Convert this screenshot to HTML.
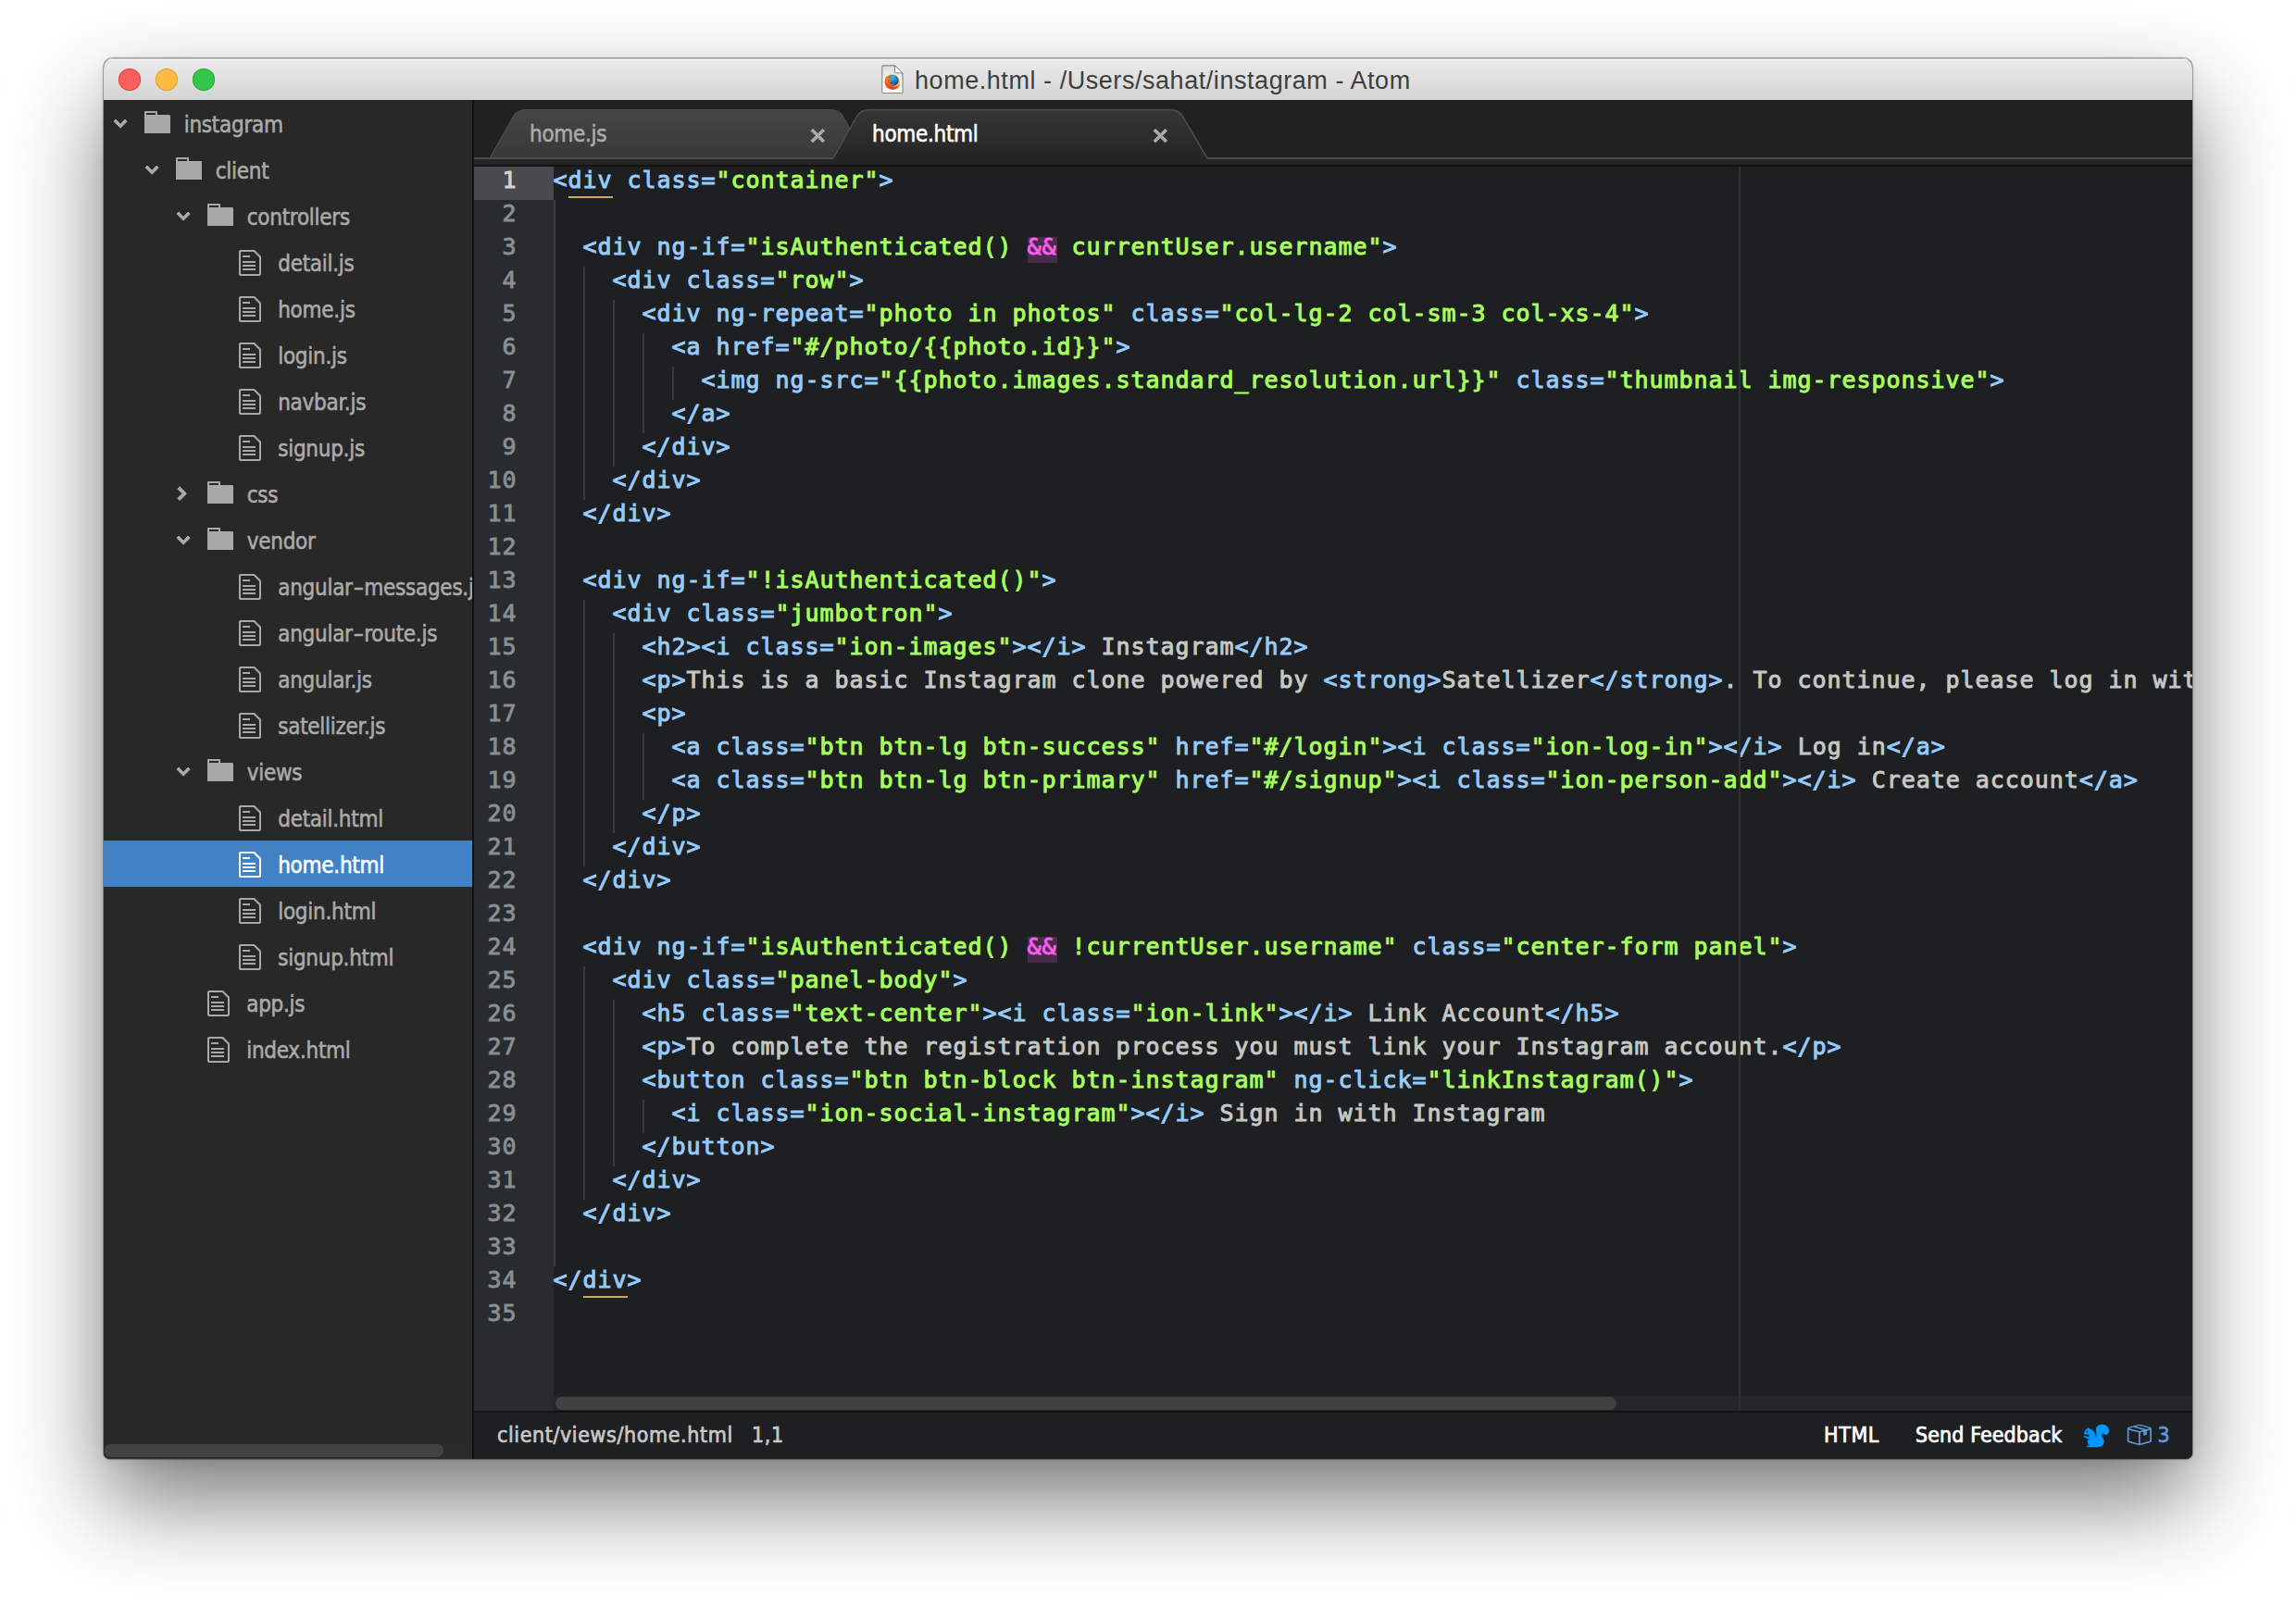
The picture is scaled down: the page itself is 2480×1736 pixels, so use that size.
<!DOCTYPE html>
<html lang="en">
<head>
<meta charset="utf-8">
<title>home.html - /Users/sahat/instagram - Atom</title>
<style>
*{box-sizing:border-box}
html,body{margin:0;padding:0}
body{width:2480px;height:1736px;background:#fff;overflow:hidden;position:relative;font-family:"DejaVu Sans Condensed","DejaVu Sans","Liberation Sans",sans-serif;font-stretch:condensed}
.win{position:absolute;left:112px;top:63px;width:2256px;height:1513px;border-radius:10px 10px 7px 7px;background:#1d1f21;
 box-shadow:0 0 1px .5px rgba(0,0,0,.35),0 46px 98px rgba(0,0,0,.52),0 4px 14px rgba(0,0,0,.07)}
.clip{position:absolute;left:0;top:0;right:0;bottom:0;border-radius:10px 10px 7px 7px;overflow:hidden}
/* title bar */
.tb{position:absolute;left:0;top:0;right:0;height:45px;background:linear-gradient(#ebebeb,#d4d4d4);box-shadow:inset 0 1px 0 #c4c4c4,inset 0 2px 0 #f3f3f3}
.tl{position:absolute;top:11px;width:24px;height:24px;border-radius:50%}
.tl.r{left:16px;background:#fc615d;box-shadow:inset 0 0 0 1px #e0443e}
.tl.y{left:56px;background:#fdbc40;box-shadow:inset 0 0 0 1px #dea035}
.tl.gr{left:96px;background:#34c84a;box-shadow:inset 0 0 0 1px #27aa35}
.ttl{position:absolute;left:876px;top:1.500px;height:45px;line-height:45px;font-family:"Liberation Sans",sans-serif;font-size:27px;color:#3e3e3e;white-space:nowrap;letter-spacing:.55px}
.doc{position:absolute;left:839px;top:6px}
/* sidebar */
.side{position:absolute;left:0;top:45px;width:398px;bottom:0;background:#282828;overflow:hidden}
.sb{position:absolute;left:398px;top:45px;width:2px;bottom:0;background:#101011}
.row{position:relative;height:50px;font-size:24px;letter-spacing:-.27px;color:#aaa;white-space:nowrap}
.row.sel{background:#4182c4;color:#fff}
.row span{position:absolute}
.row .nm,.tab-t{-webkit-text-stroke:.55px}
.st span{-webkit-text-stroke:.7px}
.row .chw{top:20.600px;line-height:0;margin-left:.5px}
.row .icw{top:12px;line-height:0}
.hy{display:inline-block;position:static!important;width:12.500px;letter-spacing:0;text-align:center;transform:scaleX(1.500)}
.row .nm{top:1.600px;line-height:50px}
svg.ic path,svg.ch path{fill:#a9a9a9}
svg.ch{overflow:visible}
svg.ch path{stroke:#a9a9a9;stroke-width:.7}
.sel svg.ic path{fill:#fff}
.row .chw svg.r{position:relative;left:1.600px;top:-2.800px}
.sscroll{position:absolute;left:1px;bottom:2px;width:366px;height:14px;border-radius:7px;background:#414342}
.strack{position:absolute;left:0;bottom:0;width:398px;height:17px;background:#2b2b2b}
/* main */
.main{position:absolute;left:400px;top:45px;right:0;bottom:0;overflow:hidden}
.tabs{position:absolute;left:0;top:0;right:0;height:72px;background:#212121}
.tabs svg{position:absolute;left:0;top:0}
.tab-t{position:absolute;top:19px;font-size:24px;letter-spacing:-.3px;line-height:36px;color:#aaa;white-space:nowrap}
.tab-t.act{color:#fff}
.ed{position:absolute;left:0;top:72px;right:0;height:1344px;background:#1d1f21;overflow:hidden}
.gut{position:absolute;left:0;top:0;width:86px;bottom:0;background:#282c2f}
.n{-webkit-text-stroke:.85px;height:36px;line-height:30.800px;font-family:"DejaVu Sans Mono","Liberation Mono",monospace;font-size:25px;letter-spacing:.949px;color:#8a8e8f;text-align:right;padding-right:39.400px;position:relative}
.n.cur{background:#484a4e;color:#d4d4d2}
.gut .ni{position:relative;top:-3px}
.code{position:absolute;left:85.500px;top:-3.100px;font-family:"DejaVu Sans Mono","Liberation Mono",monospace;font-size:25px;letter-spacing:.949px;color:#c5c8c6}
.l{height:36px;line-height:36px;white-space:pre;-webkit-text-stroke:.95px}
.t{color:#96cbfe}.s{color:#a8ff60}.i{color:#fd5ff1}
.g{position:absolute;width:2px;background:#393b3d}
.g.g0{background:#3d4144}
.ibg{position:absolute;width:32px;height:28px;background:#482a4b}
.ul{position:absolute;height:2px;width:48px;background:#c8aa66}
.wrap{position:absolute;left:1366px;top:0;width:2px;bottom:0;background:#303234;z-index:2}
.hs{position:absolute;left:86px;right:0;bottom:0;height:16px;background:#252628}
.hs i{position:absolute;left:2px;top:1px;width:1146px;height:14px;border-radius:7px;background:#404241}
.gutb{position:absolute;left:0;bottom:0;width:86px;height:16px;background:#282c2f}
.st{position:absolute;left:0;right:0;bottom:0;height:52px;background:#1d1f21;border-top:2px solid #111213;font-size:23px;letter-spacing:.6px;color:#c8c8c8;white-space:nowrap}
.st span{position:absolute;top:0;line-height:48px}
.st .w{color:#fff}
.st svg{position:absolute}
</style>
</head>
<body>
<div class="win"><div class="clip">
  <div class="tb">
    <div class="tl r"></div><div class="tl y"></div><div class="tl gr"></div>
    <svg class="doc" width="26" height="33" viewBox="0 0 26 33"><defs><linearGradient id="dg" x1="0" y1="0" x2="0" y2="1"><stop offset="0" stop-color="#dcdcdc"/><stop offset=".55" stop-color="#f4f4f4"/><stop offset="1" stop-color="#fff"/></linearGradient><radialGradient id="gb" cx=".45" cy=".25" r=".8"><stop offset="0" stop-color="#3fc1f0"/><stop offset=".5" stop-color="#1878c8"/><stop offset="1" stop-color="#06246e"/></radialGradient><linearGradient id="fx" x1="0" y1="0" x2="1" y2="0"><stop offset="0" stop-color="#e8601c"/><stop offset=".55" stop-color="#f08a1c"/><stop offset=".85" stop-color="#fbd33c"/><stop offset="1" stop-color="#f4a21f"/></linearGradient><linearGradient id="fo" x1="0" y1="0" x2="0" y2="1"><stop offset="0" stop-color="#f58a1e"/><stop offset="1" stop-color="#d8401f"/></linearGradient></defs><path d="M2.800 1.900h12.700l8.500 8.500V30.500q0 1-1 1H2.800q-1 0-1-1V2.900q0-1 1-1z" fill="url(#dg)" stroke="#858585" stroke-width="1.100"/><path d="M15.500 1.900v7q0 1 1 1H24z" fill="#fff" stroke="#858585" stroke-width="1" stroke-linejoin="round"/><g transform="translate(12.800,19.600)"><circle r="8.200" fill="url(#fx)"/><circle cx=".9" cy="-1.700" r="5.900" fill="url(#gb)"/><path d="M-7.900-1.500C-8.300 4-3.500 8.400 1.500 8.100 5 7.800 7.600 5.200 8.100 1.600 6 5 2 6-.5 4.200 1.500 4 2.500 3 2.600 2 0 3.200-2.600 2-3 0c1 .6 2 .3 2.400-.5C-2.400-1.500-2.600-3.400-1.600-4.600-3.500-4.400-5.200-4.600-6.500-6.800-7-5-7.900-4-7.900-1.500z" fill="url(#fo)"/></g></svg>
    <div class="ttl">home.html - /Users/sahat/instagram - Atom</div>
  </div>
  <div class="side">
<div class="row"><span class="chw" style="left:10px"><svg class="ch" viewBox="0 0 10 6.5" width="14.200" height="9.230"><path d="M5 6.5L0 1.5 1.5 0 5 3.75 8.5 0 10 1.5z"/></svg></span><span class="icw" style="left:44px"><svg class="ic fo" viewBox="0 0 14 12" width="28" height="24"><path fill-rule="evenodd" d="M0 .5Q0 0 .5 0H6.500Q7 0 7 .5V2H13.400Q14 2 14 2.600V12H0zM1 1V2H6V1z"/></svg></span><span class="nm" style="left:86.7px">instagram</span></div>
<div class="row"><span class="chw" style="left:44px"><svg class="ch" viewBox="0 0 10 6.5" width="14.200" height="9.230"><path d="M5 6.5L0 1.5 1.5 0 5 3.75 8.5 0 10 1.5z"/></svg></span><span class="icw" style="left:78px"><svg class="ic fo" viewBox="0 0 14 12" width="28" height="24"><path fill-rule="evenodd" d="M0 .5Q0 0 .5 0H6.500Q7 0 7 .5V2H13.400Q14 2 14 2.600V12H0zM1 1V2H6V1z"/></svg></span><span class="nm" style="left:120.7px">client</span></div>
<div class="row"><span class="chw" style="left:78px"><svg class="ch" viewBox="0 0 10 6.5" width="14.200" height="9.230"><path d="M5 6.5L0 1.5 1.5 0 5 3.75 8.5 0 10 1.5z"/></svg></span><span class="icw" style="left:112px"><svg class="ic fo" viewBox="0 0 14 12" width="28" height="24"><path fill-rule="evenodd" d="M0 .5Q0 0 .5 0H6.500Q7 0 7 .5V2H13.400Q14 2 14 2.600V12H0zM1 1V2H6V1z"/></svg></span><span class="nm" style="left:154.7px">controllers</span></div>
<div class="row"><span class="icw f" style="left:146px"><svg class="ic fi" viewBox="0 0 12 14" width="24" height="28"><path d="M6 4H2V3h4v1zM2 7h7V6H2v1zm0 2h7V8H2v1zm0 2h7v-1H2v1zm10-7.5V13c0 .55-.45 1-1 1H1c-.55 0-1-.45-1-1V1c0-.55.45-1 1-1h7.5L12 3.5zM11 4L8 1H1v12h10V4z"/></svg></span><span class="nm" style="left:188.2px">detail.js</span></div>
<div class="row"><span class="icw f" style="left:146px"><svg class="ic fi" viewBox="0 0 12 14" width="24" height="28"><path d="M6 4H2V3h4v1zM2 7h7V6H2v1zm0 2h7V8H2v1zm0 2h7v-1H2v1zm10-7.5V13c0 .55-.45 1-1 1H1c-.55 0-1-.45-1-1V1c0-.55.45-1 1-1h7.5L12 3.5zM11 4L8 1H1v12h10V4z"/></svg></span><span class="nm" style="left:188.2px">home.js</span></div>
<div class="row"><span class="icw f" style="left:146px"><svg class="ic fi" viewBox="0 0 12 14" width="24" height="28"><path d="M6 4H2V3h4v1zM2 7h7V6H2v1zm0 2h7V8H2v1zm0 2h7v-1H2v1zm10-7.5V13c0 .55-.45 1-1 1H1c-.55 0-1-.45-1-1V1c0-.55.45-1 1-1h7.5L12 3.5zM11 4L8 1H1v12h10V4z"/></svg></span><span class="nm" style="left:188.2px">login.js</span></div>
<div class="row"><span class="icw f" style="left:146px"><svg class="ic fi" viewBox="0 0 12 14" width="24" height="28"><path d="M6 4H2V3h4v1zM2 7h7V6H2v1zm0 2h7V8H2v1zm0 2h7v-1H2v1zm10-7.5V13c0 .55-.45 1-1 1H1c-.55 0-1-.45-1-1V1c0-.55.45-1 1-1h7.5L12 3.5zM11 4L8 1H1v12h10V4z"/></svg></span><span class="nm" style="left:188.2px">navbar.js</span></div>
<div class="row"><span class="icw f" style="left:146px"><svg class="ic fi" viewBox="0 0 12 14" width="24" height="28"><path d="M6 4H2V3h4v1zM2 7h7V6H2v1zm0 2h7V8H2v1zm0 2h7v-1H2v1zm10-7.5V13c0 .55-.45 1-1 1H1c-.55 0-1-.45-1-1V1c0-.55.45-1 1-1h7.5L12 3.5zM11 4L8 1H1v12h10V4z"/></svg></span><span class="nm" style="left:188.2px">signup.js</span></div>
<div class="row"><span class="chw" style="left:78px"><svg class="ch r" viewBox="0 0 6.5 10" width="9.300" height="14.300"><path d="M6.5 5l-5 5L0 8.5 3.75 5 0 1.5 1.5 0z"/></svg></span><span class="icw" style="left:112px"><svg class="ic fo" viewBox="0 0 14 12" width="28" height="24"><path fill-rule="evenodd" d="M0 .5Q0 0 .5 0H6.500Q7 0 7 .5V2H13.400Q14 2 14 2.600V12H0zM1 1V2H6V1z"/></svg></span><span class="nm" style="left:154.7px">css</span></div>
<div class="row"><span class="chw" style="left:78px"><svg class="ch" viewBox="0 0 10 6.5" width="14.200" height="9.230"><path d="M5 6.5L0 1.5 1.5 0 5 3.75 8.5 0 10 1.5z"/></svg></span><span class="icw" style="left:112px"><svg class="ic fo" viewBox="0 0 14 12" width="28" height="24"><path fill-rule="evenodd" d="M0 .5Q0 0 .5 0H6.500Q7 0 7 .5V2H13.400Q14 2 14 2.600V12H0zM1 1V2H6V1z"/></svg></span><span class="nm" style="left:154.7px">vendor</span></div>
<div class="row"><span class="icw f" style="left:146px"><svg class="ic fi" viewBox="0 0 12 14" width="24" height="28"><path d="M6 4H2V3h4v1zM2 7h7V6H2v1zm0 2h7V8H2v1zm0 2h7v-1H2v1zm10-7.5V13c0 .55-.45 1-1 1H1c-.55 0-1-.45-1-1V1c0-.55.45-1 1-1h7.5L12 3.5zM11 4L8 1H1v12h10V4z"/></svg></span><span class="nm" style="left:188.2px">angular<span class="hy">-</span>messages.js</span></div>
<div class="row"><span class="icw f" style="left:146px"><svg class="ic fi" viewBox="0 0 12 14" width="24" height="28"><path d="M6 4H2V3h4v1zM2 7h7V6H2v1zm0 2h7V8H2v1zm0 2h7v-1H2v1zm10-7.5V13c0 .55-.45 1-1 1H1c-.55 0-1-.45-1-1V1c0-.55.45-1 1-1h7.5L12 3.5zM11 4L8 1H1v12h10V4z"/></svg></span><span class="nm" style="left:188.2px">angular<span class="hy">-</span>route.js</span></div>
<div class="row"><span class="icw f" style="left:146px"><svg class="ic fi" viewBox="0 0 12 14" width="24" height="28"><path d="M6 4H2V3h4v1zM2 7h7V6H2v1zm0 2h7V8H2v1zm0 2h7v-1H2v1zm10-7.5V13c0 .55-.45 1-1 1H1c-.55 0-1-.45-1-1V1c0-.55.45-1 1-1h7.5L12 3.5zM11 4L8 1H1v12h10V4z"/></svg></span><span class="nm" style="left:188.2px">angular.js</span></div>
<div class="row"><span class="icw f" style="left:146px"><svg class="ic fi" viewBox="0 0 12 14" width="24" height="28"><path d="M6 4H2V3h4v1zM2 7h7V6H2v1zm0 2h7V8H2v1zm0 2h7v-1H2v1zm10-7.5V13c0 .55-.45 1-1 1H1c-.55 0-1-.45-1-1V1c0-.55.45-1 1-1h7.5L12 3.5zM11 4L8 1H1v12h10V4z"/></svg></span><span class="nm" style="left:188.2px">satellizer.js</span></div>
<div class="row"><span class="chw" style="left:78px"><svg class="ch" viewBox="0 0 10 6.5" width="14.200" height="9.230"><path d="M5 6.5L0 1.5 1.5 0 5 3.75 8.5 0 10 1.5z"/></svg></span><span class="icw" style="left:112px"><svg class="ic fo" viewBox="0 0 14 12" width="28" height="24"><path fill-rule="evenodd" d="M0 .5Q0 0 .5 0H6.500Q7 0 7 .5V2H13.400Q14 2 14 2.600V12H0zM1 1V2H6V1z"/></svg></span><span class="nm" style="left:154.7px">views</span></div>
<div class="row"><span class="icw f" style="left:146px"><svg class="ic fi" viewBox="0 0 12 14" width="24" height="28"><path d="M6 4H2V3h4v1zM2 7h7V6H2v1zm0 2h7V8H2v1zm0 2h7v-1H2v1zm10-7.5V13c0 .55-.45 1-1 1H1c-.55 0-1-.45-1-1V1c0-.55.45-1 1-1h7.5L12 3.5zM11 4L8 1H1v12h10V4z"/></svg></span><span class="nm" style="left:188.2px">detail.html</span></div>
<div class="row sel"><span class="icw f" style="left:146px"><svg class="ic fi" viewBox="0 0 12 14" width="24" height="28"><path d="M6 4H2V3h4v1zM2 7h7V6H2v1zm0 2h7V8H2v1zm0 2h7v-1H2v1zm10-7.5V13c0 .55-.45 1-1 1H1c-.55 0-1-.45-1-1V1c0-.55.45-1 1-1h7.5L12 3.5zM11 4L8 1H1v12h10V4z"/></svg></span><span class="nm" style="left:188.2px">home.html</span></div>
<div class="row"><span class="icw f" style="left:146px"><svg class="ic fi" viewBox="0 0 12 14" width="24" height="28"><path d="M6 4H2V3h4v1zM2 7h7V6H2v1zm0 2h7V8H2v1zm0 2h7v-1H2v1zm10-7.5V13c0 .55-.45 1-1 1H1c-.55 0-1-.45-1-1V1c0-.55.45-1 1-1h7.5L12 3.5zM11 4L8 1H1v12h10V4z"/></svg></span><span class="nm" style="left:188.2px">login.html</span></div>
<div class="row"><span class="icw f" style="left:146px"><svg class="ic fi" viewBox="0 0 12 14" width="24" height="28"><path d="M6 4H2V3h4v1zM2 7h7V6H2v1zm0 2h7V8H2v1zm0 2h7v-1H2v1zm10-7.5V13c0 .55-.45 1-1 1H1c-.55 0-1-.45-1-1V1c0-.55.45-1 1-1h7.5L12 3.5zM11 4L8 1H1v12h10V4z"/></svg></span><span class="nm" style="left:188.2px">signup.html</span></div>
<div class="row"><span class="icw f" style="left:112px"><svg class="ic fi" viewBox="0 0 12 14" width="24" height="28"><path d="M6 4H2V3h4v1zM2 7h7V6H2v1zm0 2h7V8H2v1zm0 2h7v-1H2v1zm10-7.5V13c0 .55-.45 1-1 1H1c-.55 0-1-.45-1-1V1c0-.55.45-1 1-1h7.5L12 3.5zM11 4L8 1H1v12h10V4z"/></svg></span><span class="nm" style="left:154.2px">app.js</span></div>
<div class="row"><span class="icw f" style="left:112px"><svg class="ic fi" viewBox="0 0 12 14" width="24" height="28"><path d="M6 4H2V3h4v1zM2 7h7V6H2v1zm0 2h7V8H2v1zm0 2h7v-1H2v1zm10-7.5V13c0 .55-.45 1-1 1H1c-.55 0-1-.45-1-1V1c0-.55.45-1 1-1h7.5L12 3.5zM11 4L8 1H1v12h10V4z"/></svg></span><span class="nm" style="left:154.2px">index.html</span></div>
    <div class="strack"></div><div class="sscroll"></div>
  </div>
  <div class="sb"></div>
  <div class="main">
    <div class="tabs">
      <svg width="1856" height="72" viewBox="0 0 1856 72">
        <defs>
          <linearGradient id="ti" x1="0" y1="0" x2="0" y2="1"><stop offset="0" stop-color="#464646"/><stop offset="1" stop-color="#383838"/></linearGradient>
          <linearGradient id="ta" x1="0" y1="0" x2="0" y2="1"><stop offset="0" stop-color="#363636"/><stop offset="1" stop-color="#242424"/></linearGradient>
        </defs>
        <rect x="0" y="62" width="1856" height="10" fill="#242424"/>
        <rect x="0" y="70" width="1856" height="2" fill="#131313"/>
        <path d="M17 63 L43 17 Q47 10.500 56 10.500 L385 10.500 Q394 10.500 398 17 L424 63 Z" fill="url(#ti)" stroke="#4e4e4e" stroke-width="1.200"/>
        <rect x="0" y="62" width="1856" height="2" fill="#4b4b4b"/>
        <path d="M388 64 L414 17 Q418 10.500 427 10.500 L752 10.500 Q761 10.500 765 17 L792 64 Z" fill="url(#ta)"/>
        <path d="M388 63 L414 17 Q418 10.500 427 10.500 L752 10.500 Q761 10.500 765 17 L792 63" fill="none" stroke="#4b4b4b" stroke-width="1.500"/>
        <g fill="#a8a8a8" stroke="#a8a8a8" stroke-width=".7" stroke-linejoin="miter"><path transform="translate(364,31.300) scale(1.400)" d="M6.710 5.230l3.750 3.750-1.480 1.480L5.230 6.710l-3.750 3.750L0 8.980l3.750-3.750L0 1.480 1.480 0l3.750 3.750L8.980 0l1.480 1.480z"/>
        <path transform="translate(734,31.300) scale(1.400)" d="M6.710 5.230l3.750 3.750-1.480 1.480L5.230 6.710l-3.750 3.750L0 8.980l3.750-3.750L0 1.480 1.480 0l3.750 3.750L8.980 0l1.480 1.480z"/></g>
      </svg>
      <div class="tab-t" style="left:60px">home.js</div>
      <div class="tab-t act" style="left:430px">home.html</div>
    </div>
    <div class="ed">
      <div class="gut">
<div class="n cur">1</div>
<div class="n">2</div>
<div class="n">3</div>
<div class="n">4</div>
<div class="n">5</div>
<div class="n">6</div>
<div class="n">7</div>
<div class="n">8</div>
<div class="n">9</div>
<div class="n">10</div>
<div class="n">11</div>
<div class="n">12</div>
<div class="n">13</div>
<div class="n">14</div>
<div class="n">15</div>
<div class="n">16</div>
<div class="n">17</div>
<div class="n">18</div>
<div class="n">19</div>
<div class="n">20</div>
<div class="n">21</div>
<div class="n">22</div>
<div class="n">23</div>
<div class="n">24</div>
<div class="n">25</div>
<div class="n">26</div>
<div class="n">27</div>
<div class="n">28</div>
<div class="n">29</div>
<div class="n">30</div>
<div class="n">31</div>
<div class="n">32</div>
<div class="n">33</div>
<div class="n">34</div>
<div class="n">35</div>
      </div>
      <div class="wrap"></div>
<div class="g g0" style="left:86px;top:36px;height:1152px"></div>
<div class="g" style="left:118px;top:108px;height:252px"></div>
<div class="g" style="left:150px;top:144px;height:180px"></div>
<div class="g" style="left:182px;top:180px;height:108px"></div>
<div class="g" style="left:214px;top:216px;height:36px"></div>
<div class="g" style="left:118px;top:468px;height:288px"></div>
<div class="g" style="left:150px;top:504px;height:216px"></div>
<div class="g" style="left:182px;top:612px;height:72px"></div>
<div class="g" style="left:118px;top:864px;height:252px"></div>
<div class="g" style="left:150px;top:900px;height:180px"></div>
<div class="g" style="left:182px;top:1008px;height:36px"></div>
      <div class="ibg" style="left:598px;top:76px"></div>
      <div class="ibg" style="left:598px;top:832px"></div>
      <div class="ul" style="left:102px;top:32px"></div>
      <div class="ul" style="left:118px;top:1220px"></div>
      <div class="code">
<div class="l"><span class="t">&lt;div class=</span><span class="s">"container"</span><span class="t">&gt;</span></div>
<div class="l"></div>
<div class="l">  <span class="t">&lt;div ng-if=</span><span class="s">"isAuthenticated() </span><span class="i">&amp;&amp;</span><span class="s"> currentUser.username"</span><span class="t">&gt;</span></div>
<div class="l">    <span class="t">&lt;div class=</span><span class="s">"row"</span><span class="t">&gt;</span></div>
<div class="l">      <span class="t">&lt;div ng-repeat=</span><span class="s">"photo in photos"</span><span class="t"> class=</span><span class="s">"col-lg-2 col-sm-3 col-xs-4"</span><span class="t">&gt;</span></div>
<div class="l">        <span class="t">&lt;a href=</span><span class="s">"#/photo/{{photo.id}}"</span><span class="t">&gt;</span></div>
<div class="l">          <span class="t">&lt;img ng-src=</span><span class="s">"{{photo.images.standard_resolution.url}}"</span><span class="t"> class=</span><span class="s">"thumbnail img-responsive"</span><span class="t">&gt;</span></div>
<div class="l">        <span class="t">&lt;/a&gt;</span></div>
<div class="l">      <span class="t">&lt;/div&gt;</span></div>
<div class="l">    <span class="t">&lt;/div&gt;</span></div>
<div class="l">  <span class="t">&lt;/div&gt;</span></div>
<div class="l"></div>
<div class="l">  <span class="t">&lt;div ng-if=</span><span class="s">"!isAuthenticated()"</span><span class="t">&gt;</span></div>
<div class="l">    <span class="t">&lt;div class=</span><span class="s">"jumbotron"</span><span class="t">&gt;</span></div>
<div class="l">      <span class="t">&lt;h2&gt;&lt;i class=</span><span class="s">"ion-images"</span><span class="t">&gt;&lt;/i&gt;</span> Instagram<span class="t">&lt;/h2&gt;</span></div>
<div class="l">      <span class="t">&lt;p&gt;</span>This is a basic Instagram clone powered by <span class="t">&lt;strong&gt;</span>Satellizer<span class="t">&lt;/strong&gt;</span>. To continue, please log in with your Instagram account.<span class="t">&lt;/p&gt;</span></div>
<div class="l">      <span class="t">&lt;p&gt;</span></div>
<div class="l">        <span class="t">&lt;a class=</span><span class="s">"btn btn-lg btn-success"</span><span class="t"> href=</span><span class="s">"#/login"</span><span class="t">&gt;&lt;i class=</span><span class="s">"ion-log-in"</span><span class="t">&gt;&lt;/i&gt;</span> Log in<span class="t">&lt;/a&gt;</span></div>
<div class="l">        <span class="t">&lt;a class=</span><span class="s">"btn btn-lg btn-primary"</span><span class="t"> href=</span><span class="s">"#/signup"</span><span class="t">&gt;&lt;i class=</span><span class="s">"ion-person-add"</span><span class="t">&gt;&lt;/i&gt;</span> Create account<span class="t">&lt;/a&gt;</span></div>
<div class="l">      <span class="t">&lt;/p&gt;</span></div>
<div class="l">    <span class="t">&lt;/div&gt;</span></div>
<div class="l">  <span class="t">&lt;/div&gt;</span></div>
<div class="l"></div>
<div class="l">  <span class="t">&lt;div ng-if=</span><span class="s">"isAuthenticated() </span><span class="i">&amp;&amp;</span><span class="s"> !currentUser.username"</span><span class="t"> class=</span><span class="s">"center-form panel"</span><span class="t">&gt;</span></div>
<div class="l">    <span class="t">&lt;div class=</span><span class="s">"panel-body"</span><span class="t">&gt;</span></div>
<div class="l">      <span class="t">&lt;h5 class=</span><span class="s">"text-center"</span><span class="t">&gt;&lt;i class=</span><span class="s">"ion-link"</span><span class="t">&gt;&lt;/i&gt;</span> Link Account<span class="t">&lt;/h5&gt;</span></div>
<div class="l">      <span class="t">&lt;p&gt;</span>To complete the registration process you must link your Instagram account.<span class="t">&lt;/p&gt;</span></div>
<div class="l">      <span class="t">&lt;button class=</span><span class="s">"btn btn-block btn-instagram"</span><span class="t"> ng-click=</span><span class="s">"linkInstagram()"</span><span class="t">&gt;</span></div>
<div class="l">        <span class="t">&lt;i class=</span><span class="s">"ion-social-instagram"</span><span class="t">&gt;&lt;/i&gt;</span> Sign in with Instagram</div>
<div class="l">      <span class="t">&lt;/button&gt;</span></div>
<div class="l">    <span class="t">&lt;/div&gt;</span></div>
<div class="l">  <span class="t">&lt;/div&gt;</span></div>
<div class="l"></div>
<div class="l"><span class="t">&lt;/div&gt;</span></div>
<div class="l"></div>
      </div>
      <div class="hs"><i></i></div><div class="gutb"></div>
    </div>
    <div class="st">
      <span style="left:25px">client/views/home.html</span>
      <span style="left:300px">1,1</span>
      <span class="w" style="left:1458px">HTML</span>
      <span class="w" style="left:1557px;letter-spacing:.1px">Send Feedback</span>
      <svg style="left:1738px;top:11.300px" width="28" height="28" viewBox="0 0 16 16"><path fill="#0098ff" d="M12 1C9.790 1 8 2.310 8 3.920c0 1.940.5 3.030 0 6.080 0-4.500-2.770-6.340-4-6.340.050-.5-.480-.660-.480-.660s-.220.110-.3.340c-.270-.310-.560-.270-.560-.270l-.130.580S.7 4.290.680 6.870c.2.330 1.530.6 2.470.430.890.050.670.790.470.990C2.780 9.130 2 8 1 8S0 9 1 9s1 1 3 1c-3.090 1.200 0 4 0 4H3c-1 0-1 1-1 1h6c3 0 5-1 5-3.470 0-.850-.430-1.790-1-2.530-1.110-1.460.230-2.680 1-2 .770.680 3 1 3-2 0-2.210-1.790-4-4-4zM2.500 6c-.280 0-.5-.220-.5-.5s.220-.5.5-.5.500.220.500.5-.220.500-.5.500z"/></svg>
      <svg style="left:1784px;top:10.300px" width="28" height="28" viewBox="0 0 16 16"><path fill="#5f95d4" d="M1 4.270v7.470c0 .450.3.840.750.970l6.500 1.730c.160.050.340.050.5 0l6.500-1.730c.450-.130.750-.520.750-.970V4.270c0-.450-.3-.840-.750-.970l-6.500-1.740a1.400 1.400 0 0 0-.5 0L1.750 3.300c-.450.130-.750.520-.750.970zm7 9.090l-6-1.590V5l6 1.610v6.750zM2 4l2.500-.670L11 5.060l-2.500.670L2 4zm13 7.770l-6 1.590V6.610l2-.550V8.500l2-.530V5.530L15 5v6.770zm-2-7.240L6.500 2.800l2-.530L15 4l-2 .530z"/></svg>
      <span style="left:1818.500px;color:#5a96e0">3</span>
    </div>
  </div>
</div></div>
</body>
</html>
